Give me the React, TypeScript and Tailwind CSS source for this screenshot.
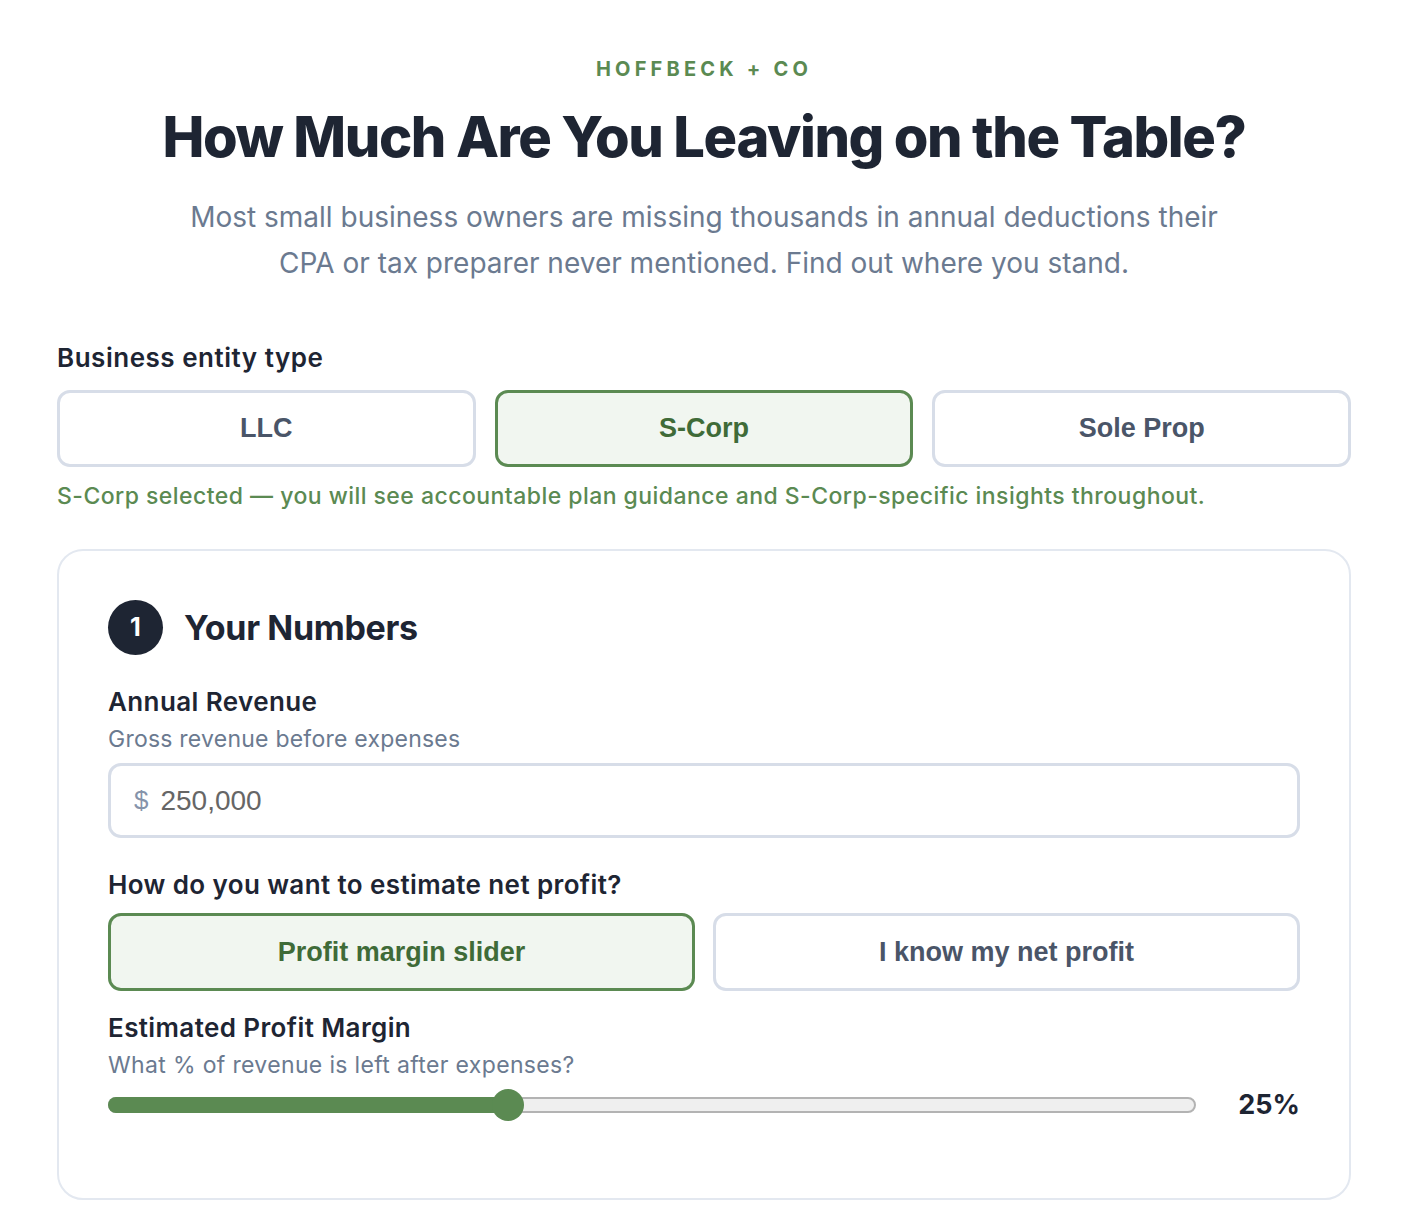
const entityTypes = ['LLC', 'S-Corp', 'Sole Prop'];

const btnBase =
  "rounded-[13px] border-[3px] font-['Liberation_Sans',Arial,sans-serif] text-[27px] font-bold";
const btnOn = 'border-[#5b8a52] bg-[#f1f6f0] text-[#3f6b38]';
const btnOff = 'border-[#d7dde8] bg-white text-[#4a5568]';

export default function App() {
  const entity = 'S-Corp';
  const mode = 'slider';
  const margin = 25;
  // thumb sits at 400/1088 of the track in the reference
  const fillPct = 36.8;

  return (
    <div className="min-h-screen bg-white font-['Inter',sans-serif] text-[#1e2533]">
      <div className="mx-auto w-[1294px] pt-[56px] pb-[22px]">
        {/* Header */}
        <div className="text-center">
          <div className="text-[20px] font-bold tracking-[0.21em] text-[#5b8a52] leading-[26px]">
            HOFFBECK + CO
          </div>
          <h1 className="mt-[19px] text-[56px] font-extrabold tracking-[-0.025em] leading-[72px]">
            How Much Are You Leaving on the Table?
          </h1>
          <p className="mx-auto mt-[21px] w-[1050px] text-[28px] leading-[46px] text-[#6b7a90]">
            Most small business owners are missing thousands in annual deductions their CPA or tax
            preparer never mentioned. Find out where you stand.
          </p>
        </div>

        {/* Entity type */}
        <div className="mt-[56px]">
          <label className="block text-[26px] font-semibold leading-[32px] tracking-[0.02em]">
            Business entity type
          </label>
          <div className="mt-[16px] grid grid-cols-3 gap-[19px]">
            {entityTypes.map((type) => (
              <button
                key={type}
                type="button"
                className={`h-[77px] ${btnBase} ${type === entity ? btnOn : btnOff}`}
              >
                {type}
              </button>
            ))}
          </div>
          <p className="mt-[14px] text-[23px] font-medium leading-[30px] tracking-[0.02em] text-[#5b8a52]">
            S-Corp selected — you will see accountable plan guidance and S-Corp-specific insights throughout.
          </p>
        </div>

        {/* Card */}
        <div className="mt-[38px] rounded-[26px] border-2 border-[#e3e8f0] px-[49px] pt-[49px] pb-[72px]">
          <div className="flex items-center gap-[21px]">
            <div className="flex h-[55px] w-[55px] items-center justify-center rounded-full bg-[#1e2533] text-[25px] font-bold text-white">
              1
            </div>
            <h2 className="text-[34px] font-bold tracking-[-0.01em]">Your Numbers</h2>
          </div>

          {/* Annual revenue */}
          <div className="mt-[30px]">
            <label className="block text-[26px] font-semibold leading-[34px] tracking-[0.015em]">
              Annual Revenue
            </label>
            <p className="mt-[4px] text-[23px] leading-[32px] tracking-[0.01em] text-[#6b7a90]">
              Gross revenue before expenses
            </p>
            <div className="mt-[8px] flex h-[75px] items-center rounded-[13px] border-[3px] border-[#d7dde8] px-[23px]">
              <span className="font-['Liberation_Sans',Arial,sans-serif] text-[26px] text-[#8593aa]">$</span>
              <input
                readOnly
                value="250,000"
                className="ml-[12px] flex-1 bg-transparent font-['Liberation_Sans',Arial,sans-serif] text-[28px] text-[#666] outline-none"
              />
            </div>
          </div>

          {/* Estimate mode */}
          <div className="mt-[30px]">
            <label className="block text-[26px] font-semibold leading-[34px] tracking-[0.015em]">
              How do you want to estimate net profit?
            </label>
            <div className="mt-[11px] grid grid-cols-2 gap-[18px]">
              <button type="button" className={`h-[78px] ${btnBase} ${mode === 'slider' ? btnOn : btnOff}`}>
                Profit margin slider
              </button>
              <button type="button" className={`h-[78px] ${btnBase} ${mode === 'slider' ? btnOff : btnOn}`}>
                I know my net profit
              </button>
            </div>
          </div>

          {/* Profit margin */}
          <div className="mt-[20px]">
            <label className="block text-[26px] font-semibold leading-[34px] tracking-[0.015em]">
              Estimated Profit Margin
            </label>
            <p className="mt-[4px] text-[23px] leading-[32px] tracking-[0.015em] text-[#6b7a90]">
              What % of revenue is left after expenses?
            </p>
            <div className="mt-[4px] flex items-center gap-[40px]">
              <div className="relative h-[32px] flex-1">
                <div className="absolute left-0 right-0 top-[8px] h-[16px] rounded-full border-2 border-[#b3b3b3] bg-[#efefef]" />
                <div
                  className="absolute left-0 top-[8px] h-[16px] rounded-full bg-[#5b8a52]"
                  style={{ width: `${fillPct}%` }}
                />
                <div
                  className="absolute top-0 h-[32px] w-[32px] -translate-x-1/2 rounded-full bg-[#5b8a52]"
                  style={{ left: `${fillPct}%` }}
                />
              </div>
              <div className="w-[64px] text-right text-[27px] font-bold">{margin}%</div>
            </div>
          </div>
        </div>
      </div>
    </div>
  );
}
